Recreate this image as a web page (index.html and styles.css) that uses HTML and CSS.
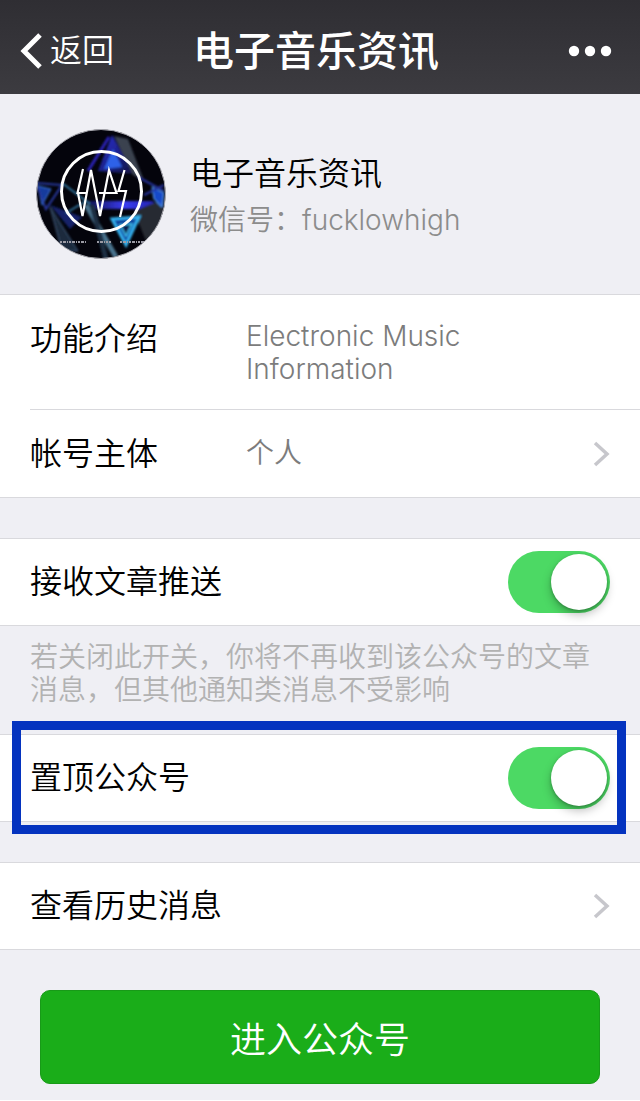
FILE: index.html
```html
<!DOCTYPE html>
<html lang="zh-CN">
<head>
    <meta charset="UTF-8">
    <meta name="viewport" content="width=device-width, initial-scale=1.0">
    <title>电子音乐资讯</title>
    <link rel="stylesheet" href="styles.css">
</head>
<body>
    <header class="navbar">
        <a href="#" class="back">
            <svg width="22" height="36" viewBox="0 0 22 36" aria-hidden="true">
                <path d="M20 2 L4 18 L20 34" fill="none" stroke="#fff" stroke-width="5"/>
            </svg>
            <span>返回</span>
        </a>
        <h1>电子音乐资讯</h1>
        <button type="button" class="more" aria-label="更多">
            <svg width="44" height="12" viewBox="0 0 44 12">
                <circle cx="6" cy="6" r="5.2" fill="#fff"/>
                <circle cx="22" cy="6" r="5.2" fill="#fff"/>
                <circle cx="38" cy="6" r="5.2" fill="#fff"/>
            </svg>
        </button>
    </header>

    <main>
        <section class="profile">
            <svg class="avatar" viewBox="0 0 130 130" aria-hidden="true">
                <defs>
                    <clipPath id="round"><circle cx="65" cy="65" r="64.5"/></clipPath>
                    <linearGradient id="beam" x1="0" x2="1" y1="0" y2="0">
                        <stop offset="0" stop-color="#10104a"/>
                        <stop offset=".5" stop-color="#3a3cf0"/>
                        <stop offset="1" stop-color="#1c1c9a"/>
                    </linearGradient>
                    <linearGradient id="shard" x1="0" x2="1" y1="0" y2="1">
                        <stop offset="0" stop-color="#2a30d8"/>
                        <stop offset="1" stop-color="#101440"/>
                    </linearGradient>
                    <filter id="soft"><feGaussianBlur stdDeviation="1"/></filter>
                </defs>
                <g clip-path="url(#round)">
                    <rect width="130" height="130" fill="#04040c"/>
                    <g filter="url(#soft)">
                        <path d="M76 6 L98 45 L62 42 Z" fill="url(#shard)"/>
                        <path d="M78 7 L92 10 L108 52 L97 46 Z" fill="#3a4250"/>
                        <path d="M77 20 L86 38 L68 40 Z" fill="#2f62e8"/>
                        <path d="M73 8 L52 42" stroke="#2a20b8" stroke-width="3"/>
                        <path d="M50 72 H116 L128 80 H58 Z" fill="url(#beam)"/>
                        <path d="M98 82 L128 70 V130 H92 L110 112 Z" fill="#262a32"/>
                        <path d="M76 90 L103 88 L90 116 Z" fill="#0d3f9c" stroke="#35b4f2" stroke-width="3"/>
                        <path d="M84 96 L96 95 L90 107 Z" fill="#07184a" stroke="#43c8f4" stroke-width="1.5"/>
                        <path d="M50 76 L80 128" stroke="#48738e" stroke-width="5"/>
                        <path d="M56 76 L70 130" stroke="#1c2d42" stroke-width="5"/>
                        <path d="M14 78 L42 122 L26 122 Z" fill="#1b2a3c" stroke="#3d5878"/>
                        <path d="M14 76 L46 88 L34 100 Z" fill="#12246a"/>
                        <path d="M2 57 L15 60 L6 76 Z" fill="#143a9c" stroke="#3a76dc"/>
                        <path d="M0 54 L26 56 L10 80 Z" fill="none" stroke="#2738a0" stroke-width="2"/>
                        <path d="M26 54 L54 75 M30 84 L50 72" stroke="#31739c" stroke-width="2"/>
                        <path d="M116 58 L128 64 L126 78 L118 70 Z" fill="#1549c8" stroke="#5aa4ff"/>
                        <path d="M102 48 L128 62 M108 66 L128 56" stroke="#25309a" stroke-width="2"/>
                    </g>
                    <circle cx="65.5" cy="62.5" r="40" fill="none" stroke="#fff" stroke-width="3"/>
                    <path d="M47 40 L41.5 64 H50 M42 64 L46.5 87 L55 41 L64 87 L73 41 L80.500 64 H63 M88.500 41 L82.500 62 H90 L84 88" fill="none" stroke="#fff" stroke-width="2.2"/>
                    <path d="M24 113 H51 M61 113 H75 M84 113 H108" stroke="#9a9aa4" stroke-width="2" stroke-dasharray="2 1 3 1 1 1"/>
                </g>
                <circle cx="65" cy="65" r="64.5" fill="none" stroke="#a9a9b0"/>
            </svg>
            <div class="profile-text">
                <h2>电子音乐资讯</h2>
                <p>微信号：fucklowhigh</p>
            </div>
        </section>

        <section class="group">
            <div class="row intro">
                <span class="label">功能介绍</span>
                <span class="value">Electronic Music Information</span>
            </div>
            <a href="#" class="row">
                <span class="label">帐号主体</span>
                <span class="value">个人</span>
                <svg class="arrow" width="18" height="28" viewBox="0 0 18 28" aria-hidden="true">
                    <path d="M3 3 L15 14 L3 25" fill="none" stroke="#c7c7cc" stroke-width="3.5"/>
                </svg>
            </a>
        </section>

        <section class="group">
            <div class="row">
                <label class="label" for="push">接收文章推送</label>
                <input type="checkbox" class="switch" id="push" checked>
            </div>
        </section>
        <p class="note">若关闭此开关，你将不再收到该公众号的文章消息，但其他通知类消息不受影响</p>

        <section class="group highlight">
            <div class="row">
                <label class="label" for="top">置顶公众号</label>
                <input type="checkbox" class="switch" id="top" checked>
            </div>
        </section>

        <section class="group">
            <a href="#" class="row">
                <span class="label">查看历史消息</span>
                <svg class="arrow" width="18" height="28" viewBox="0 0 18 28" aria-hidden="true">
                    <path d="M3 3 L15 14 L3 25" fill="none" stroke="#c7c7cc" stroke-width="3.5"/>
                </svg>
            </a>
        </section>

        <button type="button" class="enter">进入公众号</button>
    </main>
</body>
</html>
```
FILE: styles.css
```css
* {
    box-sizing: border-box;
}
body {
    margin: 0;
    background: #fff;
    color: #000;
    font-family: Inter, "Noto Sans CJK SC", sans-serif;
    font-weight: 350;
}
h1, h2, p {
    margin: 0;
}
a {
    color: inherit;
    text-decoration: none;
}
button {
    border: none;
    padding: 0;
    font-family: inherit;
    cursor: pointer;
}
main {
    background: #efeff4;
    padding-bottom: 16px;
}

/* top bar */
.navbar {
    display: grid;
    grid-template-columns: 1fr auto 1fr;
    align-items: center;
    height: 94px;
    padding: 8px 28px 0 20px;
    background: linear-gradient(#2f2e33, #3c3b40);
    color: #fff;
}
.back {
    display: flex;
    align-items: center;
    gap: 8px;
    font-size: 32px;
    line-height: 40px;
}
.navbar h1 {
    font-size: 41px;
    line-height: 60px;
    font-weight: 500;
}
.more {
    justify-self: end;
    display: flex;
    background: none;
}

/* account */
.profile {
    display: flex;
    align-items: center;
    gap: 24px;
    height: 200px;
    padding: 0 36px;
}
.avatar {
    width: 130px;
    height: 130px;
}
.profile-text {
    padding-top: 3px;
}
.profile-text h2 {
    font-size: 32px;
    line-height: 48px;
    font-weight: 350;
}
.profile-text p {
    font-size: 28px;
    line-height: 44px;
    color: #8c8c8c;
}

/* list */
.group {
    background: #fff;
    border-top: 1px solid #d9d9dd;
    border-bottom: 1px solid #d9d9dd;
    margin-bottom: 40px;
}
.row {
    display: flex;
    align-items: center;
    min-height: 86px;
    padding-right: 30px;
    margin-left: 30px;
}
.row + .row {
    min-height: 88px;
    border-top: 1px solid #d9d9dd;
}
.label {
    flex: 1;
    font-size: 32px;
    line-height: 48px;
}
.label:has(+ .value) {
    flex: 0 0 216px;
}
.value {
    flex: 1;
    max-width: 260px;
    font-size: 28px;
    line-height: 33px;
    color: #7c7c7c;
}
.intro {
    align-items: flex-start;
    min-height: 114px;
    padding-top: 20px;
}
.intro .value {
    padding-top: 5px;
}
.arrow {
    margin-left: auto;
}
.switch {
    appearance: none;
    width: 102px;
    height: 62px;
    margin: 0;
    padding: 3px;
    border-radius: 31px;
    background: #e5e5ea;
    cursor: pointer;
}
.switch::before {
    content: "";
    display: block;
    width: 56px;
    height: 56px;
    border-radius: 50%;
    background: #fff;
    box-shadow: 0 5px 10px rgba(0,0,0,0.25), 0 1px 3px rgba(0,0,0,0.25);
}
.switch:checked {
    background: #4cd964;
}
.switch:checked::before {
    margin-left: auto;
}
.note {
    margin: -40px 0 0;
    padding: 15px 30px 27px;
    font-size: 28px;
    line-height: 33px;
    color: #b2b2b2;
}

/* marker frame round the row */
.highlight {
    position: relative;
}
.highlight::after {
    content: "";
    position: absolute;
    inset: -14px 14px -13px 12px;
    border: 9px solid #0433bf;
    pointer-events: none;
}

.enter {
    display: block;
    width: calc(100% - 80px);
    height: 94px;
    margin: 0 40px;
    border: 1px solid #189a18;
    border-radius: 10px;
    background: #1aad19;
    color: #fff;
    font-size: 36px;
    font-weight: 350;
}
```
